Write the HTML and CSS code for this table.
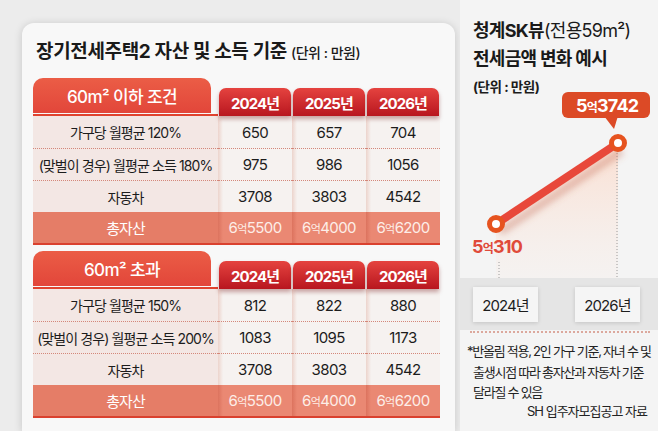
FILE: index.html
```html
<!DOCTYPE html>
<html lang="ko">
<head>
<meta charset="utf-8">
<link rel="stylesheet" href="styles.css">
</head>
<body>
<div class="page">
  <div class="left">
    <div class="card">
      <h1 class="title">장기전세주택2 자산 및 소득 기준 <span class="unit">(단위 : 만원)</span></h1>

      <div class="section">
        <div class="row head">
          <div class="cat"><div class="cat-box">60m² 이하 조건</div><div class="cat-line"></div></div>
          <div class="year">2024년</div>
          <div class="year">2025년</div>
          <div class="year">2026년</div>
        </div>
        <div class="row data">
          <div class="lab">가구당 월평균 120%</div><div class="val">650</div><div class="val">657</div><div class="val">704</div>
        </div>
        <div class="row data">
          <div class="lab">(맞벌이 경우) 월평균 소득 180%</div><div class="val">975</div><div class="val">986</div><div class="val">1056</div>
        </div>
        <div class="row data">
          <div class="lab">자동차</div><div class="val">3708</div><div class="val">3803</div><div class="val">4542</div>
        </div>
        <div class="row total">
          <div class="lab">총자산</div><div class="val">6<span class="eok">억</span>5500</div><div class="val">6<span class="eok">억</span>4000</div><div class="val">6<span class="eok">억</span>6200</div>
        </div>
      </div>

      <div class="section">
        <div class="row head">
          <div class="cat"><div class="cat-box">60m² 초과</div><div class="cat-line"></div></div>
          <div class="year">2024년</div>
          <div class="year">2025년</div>
          <div class="year">2026년</div>
        </div>
        <div class="row data">
          <div class="lab">가구당 월평균 150%</div><div class="val">812</div><div class="val">822</div><div class="val">880</div>
        </div>
        <div class="row data">
          <div class="lab">(맞벌이 경우) 월평균 소득 200%</div><div class="val">1083</div><div class="val">1095</div><div class="val">1173</div>
        </div>
        <div class="row data">
          <div class="lab">자동차</div><div class="val">3708</div><div class="val">3803</div><div class="val">4542</div>
        </div>
        <div class="row total">
          <div class="lab">총자산</div><div class="val">6<span class="eok">억</span>5500</div><div class="val">6<span class="eok">억</span>4000</div><div class="val">6<span class="eok">억</span>6200</div>
        </div>
      </div>
    </div>
  </div>

  <div class="right">
    <div class="rtitle">
      <div class="rt">청계SK뷰<span class="light">(전용59m²)</span></div>
      <div class="rt">전세금액 변화 예시</div>
      <div class="rt-unit">(단위 : 만원)</div>
    </div>
    <svg class="chart" width="198" height="183" viewBox="460 95 198 183">
      <defs>
        <linearGradient id="area" x1="0" y1="0" x2="0" y2="1">
          <stop offset="0" stop-color="#fbdccd" stop-opacity="0.9"/>
          <stop offset="1" stop-color="#f7ede8" stop-opacity="0.3"/>
        </linearGradient>
        <filter id="blur" x="-30%" y="-30%" width="160%" height="160%">
          <feGaussianBlur stdDeviation="3"/>
        </filter>
      </defs>
      <polygon points="496,224 618,143 618,278 496,278" fill="url(#area)"/>
      <line x1="499" y1="262" x2="499" y2="278" stroke="#9c9c9c" stroke-width="1" stroke-dasharray="1 2"/>
      <line x1="617" y1="150" x2="617" y2="278" stroke="#9c9c9c" stroke-width="1" stroke-dasharray="1 2"/>
      <line x1="500" y1="232" x2="622" y2="151" stroke="#c0604a" stroke-opacity="0.35" stroke-width="8" filter="url(#blur)"/>
      <line x1="496" y1="224" x2="618" y2="143" stroke="#e8483a" stroke-width="8"/>
      <circle cx="496" cy="224" r="6.5" fill="#fff" stroke="#e6531f" stroke-width="5"/>
      <circle cx="618" cy="143" r="6.5" fill="#fff" stroke="#e6531f" stroke-width="5"/>
      <rect x="562" y="92" width="88" height="26" rx="6" fill="#dc4a26"/>
      <polygon points="604,116 618,116 614,129" fill="#dc4a26"/>
      <text class="hi" x="576" y="112">5<tspan class="eok-s">억</tspan>3742</text>
      <text class="lo" x="472" y="253">5<tspan class="eok-s">억</tspan>310</text>
    </svg>
    <div class="band">
      <div class="ybox">2024년</div>
      <div class="ybox">2026년</div>
    </div>
    <div class="dots"></div>
    <p class="note">*반올림 적용, 2인 가구 기준, 자녀 수 및<br>출생시점 따라 총자산과 자동차 기준<br>달라질 수 있음</p>
    <p class="credit">SH 입주자모집공고 자료</p>
  </div>
</div>
</body>
</html>
```

FILE: styles.css
```css
* { box-sizing: border-box; margin: 0; padding: 0; }
html, body { width: 658px; height: 431px; overflow: hidden; }
body {
  background: #ececec;
  font-family: Inter, "Noto Sans CJK KR", "Noto Sans", sans-serif;
  color: #1c1c1c;
}
.page { display: flex; width: 658px; height: 431px; }

/* left card */
.left { width: 460px; flex: none; padding: 23px 0 0 22px; }
.card {
  width: 433px;
  height: 408px;
  background: #f8f8f8;
  border-radius: 12px 12px 0 0;
  box-shadow: 0 1px 9px rgba(0, 0, 0, 0.16);
  padding: 17px 15px 0 11px;
}
.title {
  font-size: 19px;
  font-weight: 700;
  letter-spacing: -0.35px;
  line-height: 24px;
  margin: 0 0 13px 3px;
  white-space: nowrap;
  color: #1a1a1a;
}
.title .unit { font-size: 14px; font-weight: 500; letter-spacing: -0.5px; }

.section { margin-bottom: 6px; }
.row { display: grid; grid-template-columns: 185px 74px 74px 74px; }
.head { height: 38px; align-items: end; }
.cat { height: 38px; display: flex; flex-direction: column; }
.cat-box {
  height: 35px;
  margin-right: 7px;
  border-radius: 10px 10px 0 0;
  background: linear-gradient(#eb5d46, #e2463a);
  color: #fff;
  font-size: 17px;
  font-weight: 500;
  letter-spacing: -0.6px;
  display: flex;
  align-items: center;
  justify-content: center;
}
.cat-line { height: 2px; margin-top: 1px; background: #e0432f; }
.year {
  height: 28px;
  margin: 0 1px;
  border-radius: 7px 7px 0 0;
  background: linear-gradient(#e5433f, #b8161f);
  color: #fff;
  font-size: 15px;
  font-weight: 700;
  letter-spacing: -0.9px;
  display: flex;
  align-items: center;
  justify-content: center;
  box-shadow: 0 3px 4px rgba(110, 10, 10, 0.35);
  position: relative;
  z-index: 1;
}

.data > div, .total > div {
  display: flex;
  align-items: center;
  justify-content: center;
  white-space: nowrap;
}
.data > div { height: 32px; }
.data + .data > div { border-top: 1px dotted #d4877a; }
.lab { font-size: 14px; letter-spacing: -0.9px; }
.val { font-size: 15px; letter-spacing: -0.6px; }
.data .lab { background: #f3e7e4; }
.data .val {
  background: linear-gradient(to right, rgba(214, 140, 120, 0.3), rgba(214, 140, 120, 0) 5px), #f6f2f0;
}
.total { border-bottom: 2px solid #da412f; }
.total > div { height: 31px; color: #fff; }
.total .lab { background: #e57d67; font-size: 15px; }
.total .val {
  background: linear-gradient(to right, rgba(185, 60, 40, 0.28), rgba(185, 60, 40, 0) 5px), #ea8873;
  color: #fdeee8;
}
.eok { font-size: 11px; }

/* right panel */
.right {
  flex: 1;
  display: flex;
  flex-direction: column;
  background: #f4f4f4;
}
.rtitle { padding: 17px 0 0 13px; height: 95px; }
.rt {
  font-size: 18px;
  font-weight: 700;
  line-height: 28px;
  letter-spacing: -0.7px;
  white-space: nowrap;
  color: #1a1a1a;
}
.rt .light { font-weight: 400; }
.rt-unit {
  font-size: 13.5px;
  font-weight: 700;
  line-height: 16px;
  margin-top: 6px;
  letter-spacing: -0.5px;
}
.chart { display: block; overflow: visible; flex: none; }
.chart text {
  font-family: Inter, "Noto Sans CJK KR", "Noto Sans", sans-serif;
  font-weight: 700;
  font-size: 18px;
  letter-spacing: -0.8px;
}
.chart .hi { fill: #ffffff; }
.chart .lo { fill: #e04a3a; }
.chart .eok-s { font-size: 12px; }

.band {
  height: 52px;
  flex: none;
  background: #e5e5e5;
  display: flex;
  gap: 37px;
  padding: 9px 0 0 13px;
}
.ybox {
  width: 65px;
  height: 35px;
  background: #f5f5f5;
  box-shadow: 0 1px 4px rgba(0, 0, 0, 0.15);
  font-size: 15px;
  letter-spacing: -0.9px;
  display: flex;
  align-items: center;
  justify-content: center;
  color: #1e1e1e;
}
.dots { margin: 1px 8px 0 10px; border-top: 2px dotted #dca89d; }
.note {
  margin-top: 8px;
  padding: 0 6px 0 13px;
  text-indent: -6px;
  font-size: 13px;
  line-height: 20.5px;
  letter-spacing: -1.25px;
  white-space: nowrap;
  color: #222;
}
.credit {
  text-align: right;
  padding-right: 11px;
  font-size: 13px;
  line-height: 16px;
  letter-spacing: -1px;
  color: #222;
}
```
